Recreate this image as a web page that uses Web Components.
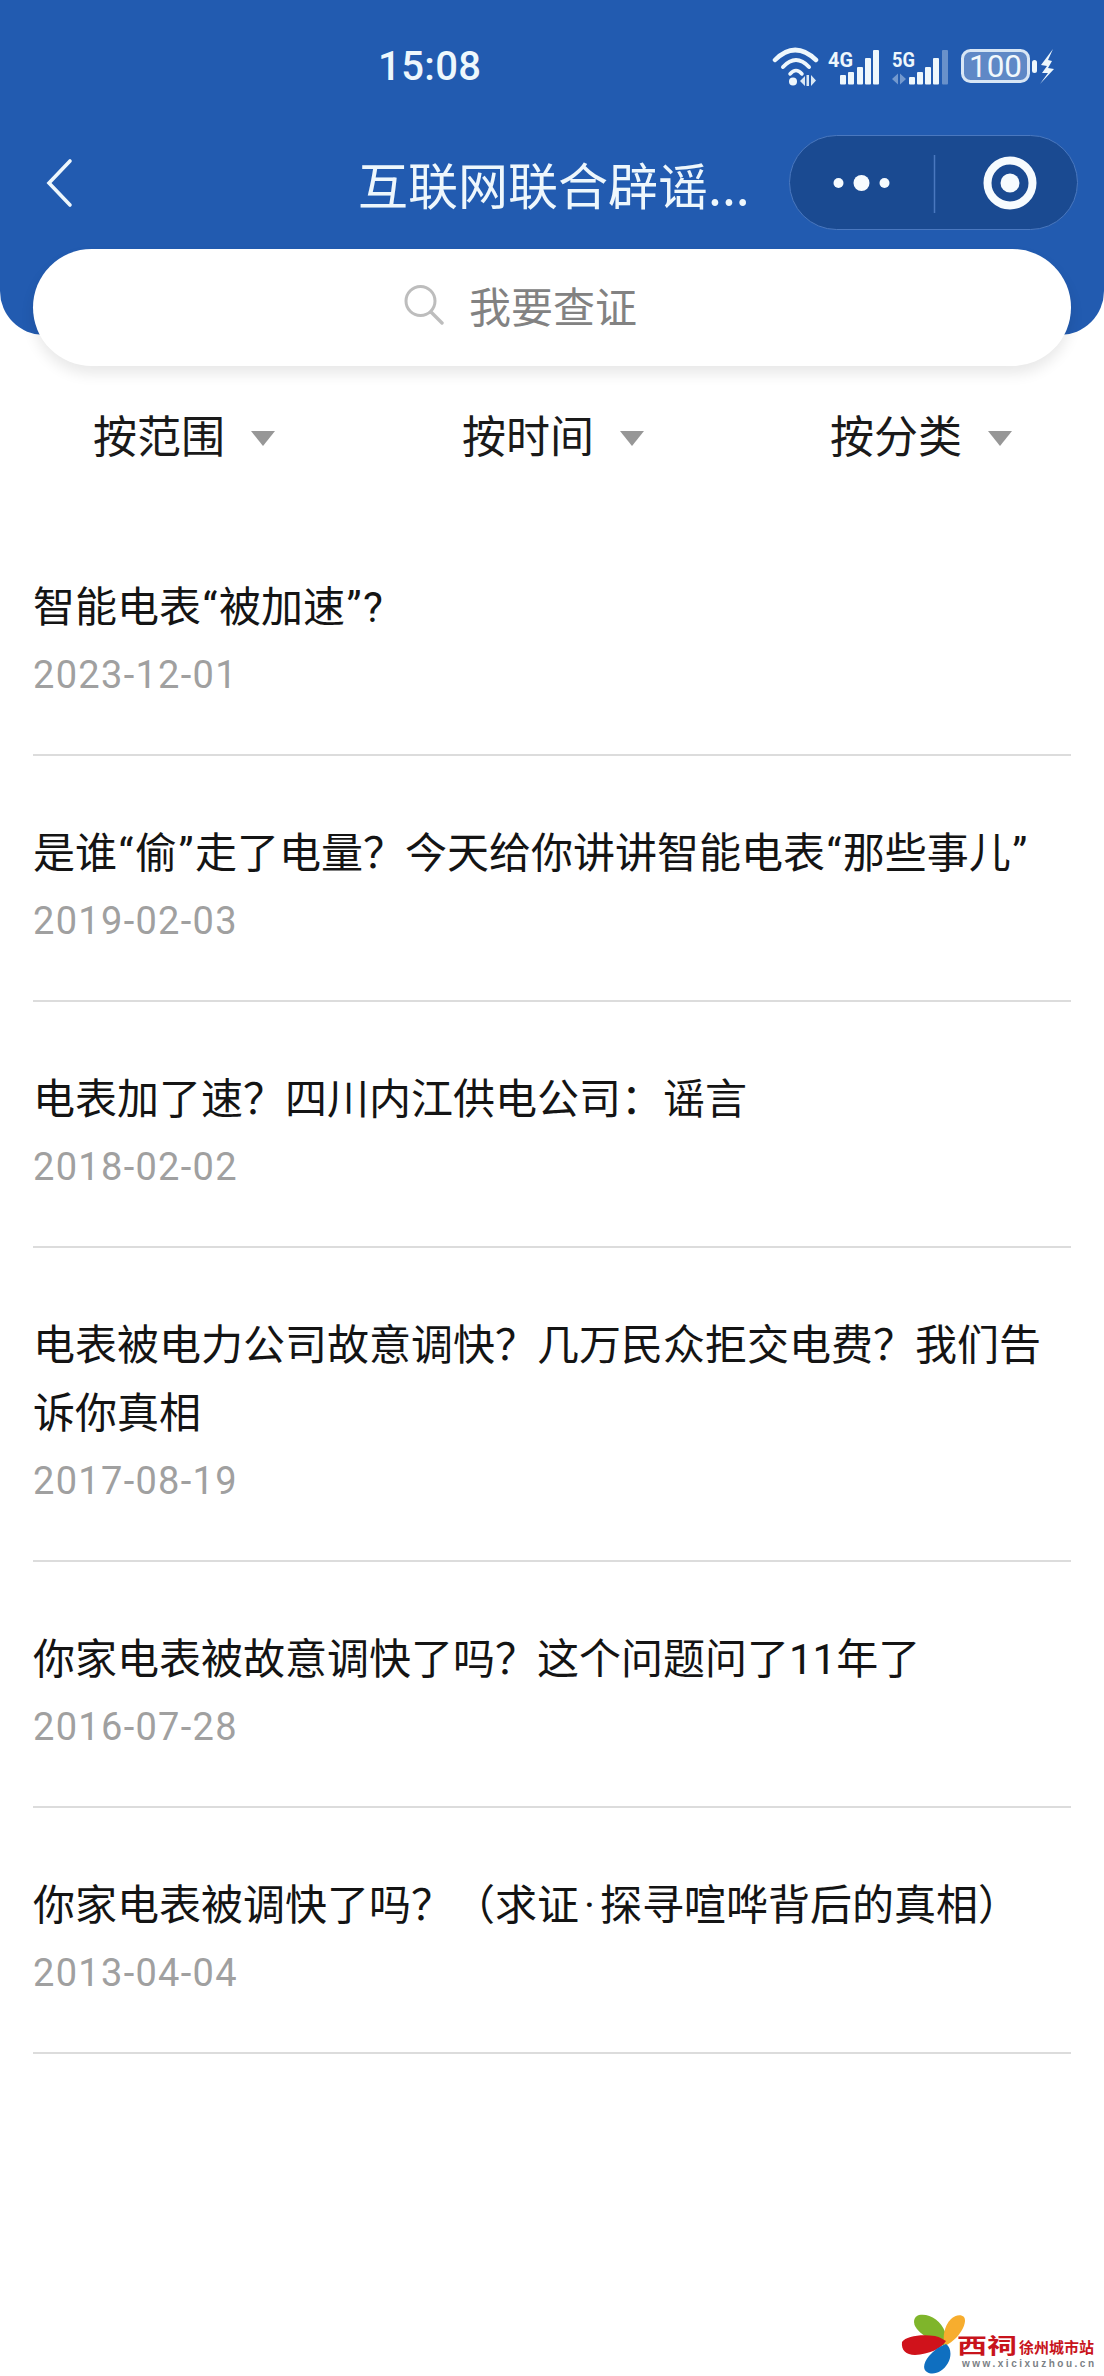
<!DOCTYPE html>
<html lang="zh-CN">
<head>
<meta charset="utf-8">
<title>互联网联合辟谣</title>
<style>
    html, body { margin: 0; padding: 0; background: #fff; }
    body { width: 1104px; height: 2376px; overflow: hidden; position: relative; font-family: "Noto Sans CJK SC", "Noto Sans", sans-serif; }
    .q { padding: 0 1.5px; }
    .dot { padding: 0 5px; }
</style>
</head>
<body>
<app-header title-text="互联网联合辟谣..." time="15:08"></app-header>
<search-box placeholder="我要查证"></search-box>
<filter-bar>
    <filter-item>按范围</filter-item>
    <filter-item>按时间</filter-item>
    <filter-item>按分类</filter-item>
</filter-bar>
<rumor-list>
    <rumor-item date="2023-12-01">智能电表<span class="q">“</span>被加速<span class="q">”</span>?</rumor-item>
    <rumor-item date="2019-02-03">是谁<span class="q">“</span>偷<span class="q">”</span>走了电量&#xFF1F;今天给你讲讲智能电表<span class="q">“</span>那些事儿<span class="q">”</span></rumor-item>
    <rumor-item date="2018-02-02">电表加了速&#xFF1F;四川内江供电公司&#xFF1A;谣言</rumor-item>
    <rumor-item date="2017-08-19">电表被电力公司故意调快&#xFF1F;几万民众拒交电费&#xFF1F;我们告诉你真相</rumor-item>
    <rumor-item date="2016-07-28">你家电表被故意调快了吗&#xFF1F;这个问题问了11年了</rumor-item>
    <rumor-item date="2013-04-04">你家电表被调快了吗&#xFF1F;&#xFF08;求证<span class="dot">·</span>探寻喧哗背后的真相&#xFF09;</rumor-item>
</rumor-list>
<site-mark></site-mark>

<script>
class AppHeader extends HTMLElement {
    constructor() {
        super();
        this.attachShadow({ mode: 'open' });
        this.shadowRoot.innerHTML = `
            <style>
                :host {
                    display: block;
                    height: 335px;
                    background: #225bb0;
                    border-radius: 0 0 44px 44px;
                    color: #eef7fc;
                    font-family: "Noto Sans CJK SC", sans-serif;
                }
                .status {
                    height: 90px;
                    display: flex;
                    align-items: center;
                    padding-left: 378px;
                    padding-top: 46px;
                    box-sizing: border-box;
                }
                .time {
                    font: 500 40px/1 Roboto, sans-serif;
                    letter-spacing: 0.4px;
                    width: 392px;
                    margin-top: -2px;
                }
                .status svg { display: block; flex: none; margin-top: -2px; }
                .nav {
                    height: 95px;
                    margin-top: 45px;
                    display: flex;
                    align-items: center;
                }
                .back { display: block; margin-left: 46px; width: 28px; height: 50px; }
                .title {
                    margin-left: 284px;
                    width: 431px;
                    font-size: 50px;
                    line-height: 60px;
                    white-space: nowrap;
                }
                .capsule {
                    box-sizing: border-box;
                    width: 289px;
                    height: 95px;
                    border-radius: 48px;
                    background: #1a4a91;
                    border: 1.5px solid #4a78bf;
                    display: flex;
                    align-items: center;
                }
                .capsule svg { display: block; }
            </style>
            <div class="status">
                <span class="time"></span>
                <svg width="290" height="44" viewBox="0 0 290 44">
                    <g fill="none" stroke="#eef7fc" stroke-linecap="round">
                        <path d="M5 15 Q25 -5 46 15" stroke-width="4.5"/>
                        <path d="M13 22 Q26 8 39 22" stroke-width="4"/>
                        <path d="M20 29 Q26 22 32 29" stroke-width="3.5"/>
                    </g>
                    <g fill="#eef7fc">
                        <circle cx="23" cy="36.5" r="4"/>
                        <path d="M30 36 L35 31 V41 Z M36.5 41 V30 H39 V41 Z M41 30 L46 35.5 L41 41 Z" opacity=".9"/>
                        <text x="58" y="22" font-family="Roboto, sans-serif" font-weight="700" font-size="21" textLength="25" lengthAdjust="spacingAndGlyphs">4G</text>
                        <rect x="70" y="30" width="6" height="9.5" rx="1"/>
                        <rect x="78" y="27" width="6" height="12.5" rx="1"/>
                        <rect x="87" y="22" width="6" height="17.5" rx="1"/>
                        <rect x="95" y="13" width="6" height="26.5" rx="1"/>
                        <rect x="103" y="5" width="6" height="34.5" rx="1"/>
                        <text x="122" y="22" font-family="Roboto, sans-serif" font-weight="700" font-size="21" textLength="23" lengthAdjust="spacingAndGlyphs">5G</text>
                        <path d="M122 34 L128 28.5 V39.5 Z M130 28.5 V39.5 L136 34 Z" opacity=".4"/>
                        <rect x="139" y="32" width="6" height="7.5" rx="1"/>
                        <rect x="147" y="27" width="6" height="12.5" rx="1"/>
                        <rect x="155" y="22" width="6" height="17.5" rx="1"/>
                        <rect x="163" y="13" width="6" height="26.5" rx="1"/>
                        <rect x="172" y="5" width="6" height="34.5" rx="1" opacity=".35"/>
                    </g>
                    <g transform="translate(2 0)">
                        <rect x="190.5" y="5.5" width="66" height="31" rx="8" fill="#5f88c6" stroke="#d8e6f5" stroke-width="3"/>
                        <text x="223.5" y="32" text-anchor="middle" font-family="Roboto, sans-serif" font-weight="400" font-size="31" fill="#f2f8fc" textLength="53" lengthAdjust="spacingAndGlyphs">100</text>
                        <rect x="260" y="15" width="5" height="13" rx="2.5" fill="#eef7fc"/>
                    </g>
                    <path d="M283 4 L271 20 L277 21 L272 28 L278 28 L270 39 L284 24 L278 23 L282 16 L278 15 Z" fill="#eef7fc"/>
                </svg>
            </div>
            <div class="nav">
                <svg class="back" viewBox="0 0 28 50" fill="none" stroke="#eef7fc" stroke-width="3.6" stroke-linecap="round" stroke-linejoin="miter">
                    <path d="M24 3 L3 25 L24 47"/>
                </svg>
                <span class="title"></span>
                <div class="capsule">
                    <svg width="286" height="92" viewBox="0 0 286 92">
                        <g fill="#f6fbfe">
                            <circle cx="48.5" cy="46" r="5"/>
                            <circle cx="71.5" cy="46" r="8"/>
                            <circle cx="94.5" cy="46" r="5"/>
                        </g>
                        <path d="M144.5 18 V76" stroke="#4a78bf" stroke-width="1.5"/>
                        <circle cx="220" cy="46" r="22.5" fill="none" stroke="#f6fbfe" stroke-width="8"/>
                        <circle cx="220" cy="46" r="9.5" fill="#f6fbfe"/>
                    </svg>
                </div>
            </div>
        `;
    }
    connectedCallback() {
        this.shadowRoot.querySelector('.time').textContent = this.getAttribute('time');
        this.shadowRoot.querySelector('.title').textContent = this.getAttribute('title-text');
    }
}

class SearchBox extends HTMLElement {
    constructor() {
        super();
        this.attachShadow({ mode: 'open' });
        this.shadowRoot.innerHTML = `
            <style>
                :host {
                    display: flex;
                    align-items: center;
                    justify-content: center;
                    box-sizing: border-box;
                    height: 117px;
                    margin: -86px 33px 0;
                    padding-right: 63px;
                    padding-bottom: 6px;
                    position: relative;
                    background: #fff;
                    border-radius: 59px;
                    box-shadow: 0 8px 14px rgba(0, 0, 0, .09);
                    color: #828282;
                    font: 42px/1 "Noto Sans CJK SC", sans-serif;
                }
                svg { display: block; margin-right: 25px; }
            </style>
            <svg width="40" height="42" viewBox="0 0 40 42" fill="none" stroke="#bdbdbd">
                <circle cx="16.5" cy="17" r="14.5" stroke-width="3"/>
                <path d="M27 28 L38 39" stroke-width="3.4" stroke-linecap="round"/>
            </svg>
            <span></span>
        `;
    }
    connectedCallback() {
        this.shadowRoot.querySelector('span').textContent = this.getAttribute('placeholder');
    }
}

class FilterBar extends HTMLElement {
    constructor() {
        super();
        this.attachShadow({ mode: 'open' });
        this.shadowRoot.innerHTML = `
            <style>
                :host {
                    display: grid;
                    grid-template-columns: 369px 368px 274px;
                    height: 144px;
                    box-sizing: border-box;
                    padding-left: 93px;
                    padding-bottom: 8px;
                    align-items: center;
                }
            </style>
            <slot></slot>
        `;
    }
}

class FilterItem extends HTMLElement {
    constructor() {
        super();
        this.attachShadow({ mode: 'open' });
        this.shadowRoot.innerHTML = `
            <style>
                :host {
                    display: flex;
                    align-items: center;
                    color: #1a1a1a;
                    font: 44px/60px "Noto Sans CJK SC", sans-serif;
                }
                i {
                    display: block;
                    width: 0;
                    height: 0;
                    margin-left: 26px;
                    margin-top: 8px;
                    border-left: 12px solid transparent;
                    border-right: 12px solid transparent;
                    border-top: 15px solid #979797;
                }
            </style>
            <slot></slot><i></i>
        `;
    }
}

class RumorList extends HTMLElement {
    constructor() {
        super();
        this.attachShadow({ mode: 'open' });
        this.shadowRoot.innerHTML = `
            <style>
                :host { display: block; padding: 0 33px; }
            </style>
            <slot></slot>
        `;
    }
}

class RumorItem extends HTMLElement {
    constructor() {
        super();
        this.attachShadow({ mode: 'open' });
        this.shadowRoot.innerHTML = `
            <style>
                :host {
                    display: block;
                    box-sizing: border-box;
                    padding: 64px 0 45px;
                    border-bottom: 2px solid #dcdcdc;
                }
                .title {
                    color: #141414;
                    font: 42px/68px Roboto, "Noto Sans CJK SC", sans-serif;
                }
                .date {
                    margin-top: -1px;
                    color: #a0a0a0;
                    font: 400 38px/68px Roboto, sans-serif;
                    letter-spacing: 1.3px;
                }
            </style>
            <div class="title"><slot></slot></div>
            <div class="date"></div>
        `;
    }
    connectedCallback() {
        this.shadowRoot.querySelector('.date').textContent = this.getAttribute('date');
    }
}

class SiteMark extends HTMLElement {
    constructor() {
        super();
        this.attachShadow({ mode: 'open' });
        this.shadowRoot.innerHTML = `
            <style>
                :host {
                    display: block;
                    position: absolute;
                    left: 900px;
                    top: 2310px;
                    width: 200px;
                    height: 64px;
                }
                svg { display: block; }
            </style>
            <svg width="200" height="64" viewBox="0 0 200 64">
                <g transform="translate(1 2)">
                    <path d="M18 3 C28 1 40 8 44 20 C46 26 45 30 43 34 C32 30 18 22 14 14 C12 9 13 5 18 3 Z" fill="#7fb52b"/>
                    <path d="M44 34 C41 26 43 14 50 7 C54 3 60 2 63 5 C66 9 62 18 56 25 C52 29 48 32 44 34 Z" fill="#f7ad2e"/>
                    <path d="M1 30 C5 24 20 22 34 24 C39 25 43 28 45 29 C40 37 28 42 14 43 C5 43 0 38 1 30 Z" fill="#d0121b"/>
                    <path d="M45 32 C50 35 51 44 47 51 C42 60 32 64 26 60 C21 57 23 50 28 44 C33 38 39 34 45 32 Z" fill="#0f6fc0"/>
                </g>
                <text x="57" y="43" font-family="'Noto Sans CJK SC', sans-serif" font-weight="700" font-size="21" fill="#c8141c" textLength="60" lengthAdjust="spacingAndGlyphs">西祠</text>
                <text x="119" y="43" font-family="'Noto Sans CJK SC', sans-serif" font-weight="700" font-size="15" fill="#c8141c" textLength="75" lengthAdjust="spacingAndGlyphs">徐州城市站</text>
                <text x="62" y="57" font-family="'Liberation Sans', sans-serif" font-weight="700" font-size="10" fill="#7b7f85" textLength="132">www.xicixuzhou.cn</text>
            </svg>
        `;
    }
}

customElements.define('app-header', AppHeader);
customElements.define('search-box', SearchBox);
customElements.define('filter-bar', FilterBar);
customElements.define('filter-item', FilterItem);
customElements.define('rumor-list', RumorList);
customElements.define('rumor-item', RumorItem);
customElements.define('site-mark', SiteMark);
</script>
</body>
</html>
